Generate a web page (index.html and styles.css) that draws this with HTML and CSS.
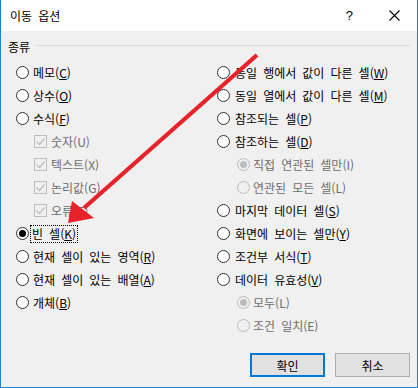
FILE: index.html
```html
<!DOCTYPE html>
<html lang="ko">
<head>
    <meta charset="UTF-8">
    <meta name="viewport" content="width=device-width, initial-scale=1.0">
    <title>이동 옵션</title>
    <link rel="stylesheet" href="styles.css">
</head>
<body>
    <div class="dialog">
        <div class="titlebar">
            <span class="title">이동 옵션</span>
            <span class="help">?</span>
            <svg class="close" width="11" height="11" viewBox="0 0 11 11">
                <path d="M0.5 0.5 L10.5 10.5 M10.5 0.5 L0.5 10.5" stroke="#000" stroke-width="1.1" fill="none"/>
            </svg>
        </div>
        <div class="content">
            <div class="group-head">
                <span>종류</span>
                <span class="rule"></span>
            </div>
            <div class="columns">
                <div class="col col-left">
                    <div class="row"><span class="radio"></span><span>메모(<u>C</u>)</span></div>
                    <div class="row"><span class="radio"></span><span>상수(<u>O</u>)</span></div>
                    <div class="row"><span class="radio"></span><span>수식(<u>F</u>)</span></div>
                    <div class="row sub disabled"><span class="check"><svg width="11" height="11" viewBox="0 0 11 11"><path d="M1.5 5.5 L4.5 8.5 L9.5 2.5" stroke="#bcbcbc" stroke-width="1.2" fill="none"/></svg></span><span>숫자(U)</span></div>
                    <div class="row sub disabled"><span class="check"><svg width="11" height="11" viewBox="0 0 11 11"><path d="M1.5 5.5 L4.5 8.5 L9.5 2.5" stroke="#bcbcbc" stroke-width="1.2" fill="none"/></svg></span><span>텍스트(X)</span></div>
                    <div class="row sub disabled"><span class="check"><svg width="11" height="11" viewBox="0 0 11 11"><path d="M1.5 5.5 L4.5 8.5 L9.5 2.5" stroke="#bcbcbc" stroke-width="1.2" fill="none"/></svg></span><span>논리값(G)</span></div>
                    <div class="row sub disabled"><span class="check"><svg width="11" height="11" viewBox="0 0 11 11"><path d="M1.5 5.5 L4.5 8.5 L9.5 2.5" stroke="#bcbcbc" stroke-width="1.2" fill="none"/></svg></span><span>오류(E)</span></div>
                    <div class="row"><span class="radio checked"></span><span class="focus">빈 셀(<u>K</u>)</span></div>
                    <div class="row"><span class="radio"></span><span>현재 셀이 있는 영역(<u>R</u>)</span></div>
                    <div class="row"><span class="radio"></span><span>현재 셀이 있는 배열(<u>A</u>)</span></div>
                    <div class="row"><span class="radio"></span><span>개체(<u>B</u>)</span></div>
                </div>
                <div class="col col-right">
                    <div class="row"><span class="radio"></span><span>동일 행에서 값이 다른 셀(<u>W</u>)</span></div>
                    <div class="row"><span class="radio"></span><span>동일 열에서 값이 다른 셀(<u>M</u>)</span></div>
                    <div class="row"><span class="radio"></span><span>참조되는 셀(<u>P</u>)</span></div>
                    <div class="row"><span class="radio"></span><span>참조하는 셀(<u>D</u>)</span></div>
                    <div class="row sub disabled"><span class="radio checked"></span><span>직접 연관된 셀만(I)</span></div>
                    <div class="row sub disabled"><span class="radio"></span><span>연관된 모든 셀(L)</span></div>
                    <div class="row"><span class="radio"></span><span>마지막 데이터 셀(<u>S</u>)</span></div>
                    <div class="row"><span class="radio"></span><span>화면에 보이는 셀만(<u>Y</u>)</span></div>
                    <div class="row"><span class="radio"></span><span>조건부 서식(<u>T</u>)</span></div>
                    <div class="row"><span class="radio"></span><span>데이터 유효성(<u>V</u>)</span></div>
                    <div class="row sub disabled"><span class="radio checked"></span><span>모두(L)</span></div>
                    <div class="row sub disabled"><span class="radio"></span><span>조건 일치(E)</span></div>
                </div>
            </div>
            <div class="buttons">
                <button class="btn btn-default" type="button">확인</button>
                <button class="btn" type="button">취소</button>
            </div>
        </div>
        <svg class="arrow" width="418" height="388" viewBox="0 0 418 388">
            <line x1="257" y1="55" x2="84" y2="208" stroke="#e8222a" stroke-width="4.2"/>
            <polygon points="68,223 72,201 94,218" fill="#e8222a"/>
        </svg>
    </div>
</body>
</html>
```

FILE: styles.css
```css
body {
    margin: 0;
    font-family: "Noto Sans CJK KR", "Malgun Gothic", sans-serif;
    font-size: 12px;
    line-height: 16px;
    word-spacing: 2.7px;
    color: #000;
    background: #fff;
}
.dialog {
    position: relative;
    width: 418px;
    height: 388px;
    box-sizing: border-box;
    border-left: 1px solid #1883d7;
    border-right: 1px solid #1883d7;
    border-bottom: 1px solid #1883d7;
    display: flex;
    flex-direction: column;
}
.titlebar {
    height: 31px;
    flex: none;
    background: #fff;
    display: flex;
    align-items: center;
    padding: 0 17px 0 9px;
}
.title {
    font-size: 12px;
}
.help {
    margin-left: auto;
    margin-right: 36px;
    font-family: "Liberation Sans", sans-serif;
    font-size: 13px;
}
.content {
    flex: 1;
    background: #f0f0f0;
    padding: 8px 7px 0 7px;
}
.group-head {
    display: flex;
    align-items: center;
    height: 16px;
}
.rule {
    flex: 1;
    height: 1px;
    background: #dcdcdc;
    margin: -3px 0 0 5px;
}
.columns {
    display: grid;
    grid-template-columns: 209px 1fr;
    margin-top: 6px;
}
.col-left {
    padding-left: 8px;
}
.row {
    height: 23px;
    display: flex;
    align-items: center;
    gap: 4px;
    white-space: nowrap;
}
.col-right .row {
    gap: 5px;
}
.col-left .sub {
    padding-left: 18px;
}
.col-right .sub {
    padding-left: 20px;
    gap: 3px;
}
.disabled {
    color: #6d6d6d;
}
.radio {
    width: 13px;
    height: 13px;
    box-sizing: border-box;
    border: 1px solid #333;
    border-radius: 50%;
    background: #fff;
    display: flex;
    align-items: center;
    justify-content: center;
    flex: none;
}
.radio.checked::after {
    content: "";
    width: 7px;
    height: 7px;
    border-radius: 50%;
    background: #000;
}
.disabled .radio {
    border-color: #bcbcbc;
    background: #f0f0f0;
}
.disabled .radio.checked::after {
    background: #bcbcbc;
}
.check {
    width: 13px;
    height: 13px;
    box-sizing: border-box;
    border: 1px solid #bcbcbc;
    background: #f0f0f0;
    display: flex;
    flex: none;
}
.focus {
    border: 1px dotted #000;
    padding: 0 1px;
    margin-left: -3px;
    line-height: 16px;
}
.buttons {
    display: flex;
    justify-content: flex-end;
    gap: 10px;
    margin-top: 16px;
}
.btn {
    width: 75px;
    height: 24px;
    box-sizing: border-box;
    border: 1px solid #adadad;
    background: #e1e1e1;
    font-family: inherit;
    font-size: 12px;
    padding: 0;
    color: #000;
}
.btn-default {
    border: 2px solid #0078d7;
}
.arrow {
    position: absolute;
    left: -1px;
    top: 0;
    pointer-events: none;
}
```
